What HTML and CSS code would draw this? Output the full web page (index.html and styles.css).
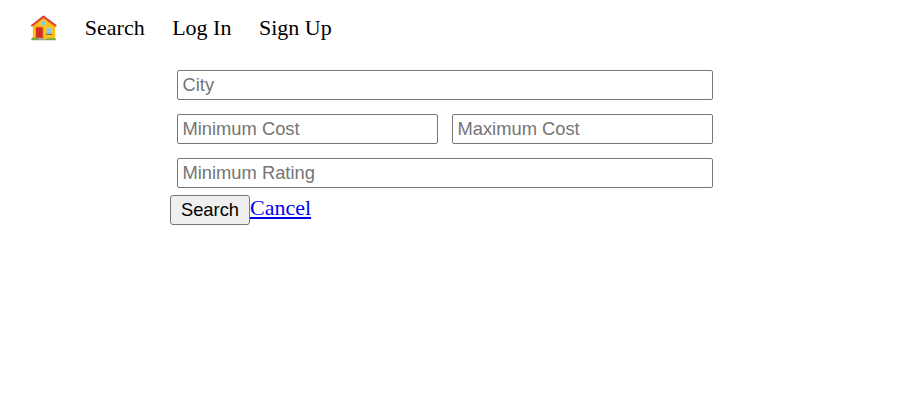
FILE: index.html
```html
<!DOCTYPE html>
<html lang="en">
<head>
<meta charset="utf-8">
<title>Search</title>
<link rel="stylesheet" href="styles.css">
</head>
<body>
<nav class="nav">
  <a class="home" aria-label="Home">
    <svg class="home-icon" viewBox="0 0 26 26" aria-hidden="true">
      <path d="M1.8 11 12.5 2.2 24.2 11v13.4H1.8z" fill="#fcc21b"/>
      <path d="M1.8 12.6 12.5 3.8 24.2 12.6v-2L12.5 1.8 1.8 10.4z" fill="#eda51b"/>
      <path d="M1 10.6 12.5 1.4 24.6 10.6" fill="none" stroke="#df3f38" stroke-width="1.9" stroke-linecap="round" stroke-linejoin="round"/>
      <path d="M10.4 6.2h4v4h-4z" fill="#68c7f5" stroke="#f3dca0" stroke-width=".5"/>
      <path d="M5 12.3h6.8V23H5z" fill="#d92b24" stroke="#c65b1c" stroke-width=".5"/>
      <path d="M15.8 13h4.8v6h-4.8z" fill="#68b8e0" stroke="#d3e2df" stroke-width=".6"/>
      <path d="M18.2 13v6M16 16h4.5" stroke="#d8eef5" stroke-width=".5"/>
      <path d="M15.2 18.8h6V20h-6z" fill="#8b6650"/>
      <path d="M.3 24.7c0-1.8 1.5-2.3 3-2 2 .4 3 .5 5 .4v2.2h-8zM15 23.8c3-.5 6-.5 9.8-.4v1.9H14z" fill="#71aa42"/>
      <path d="M6 22.8h5.5l4 2.5H9z" fill="#a8a19b"/>
    </svg>
  </a>
  <a class="nav-link">Search</a>
  <a class="nav-link">Log In</a>
  <a class="nav-link">Sign Up</a>
</nav>
<form class="search-form">
  <div class="fields">
    <input class="field wide" placeholder="City">
    <input class="field" placeholder="Minimum Cost">
    <input class="field" placeholder="Maximum Cost">
    <input class="field wide" placeholder="Minimum Rating">
  </div>
  <div class="actions">
    <button class="submit" type="button">Search</button>
    <a class="cancel" href="#">Cancel</a>
  </div>
</form>
</body>
</html>
```
FILE: styles.css
```css
* {
  box-sizing: border-box;
}

body {
  margin: 0;
  background: #fff;
  color: #000;
  font-family: "Liberation Serif", serif;
  font-size: 22px;
}

.nav {
  display: flex;
  align-items: center;
  gap: 27.5px;
  height: 56px;
  padding-left: 31px;
}

.home {
  display: flex;
  width: 26.3px;
  height: 26px;
}

.home-icon {
  width: 26px;
  height: 26px;
}

.nav-link {
  color: #000;
  text-decoration: none;
}

.search-form {
  width: 550px;
  margin-left: 170px;
  padding-top: 14px;
}

.fields {
  display: grid;
  grid-template-columns: 1fr 1fr;
  gap: 14px;
  padding: 0 7px 7px;
}

.field {
  width: 100%;
  height: 30px;
  padding: 1px 4.5px;
  border: 1px solid #767676;
  border-radius: 2px;
  font: 18.33px "Liberation Sans", sans-serif;
}

.field::placeholder {
  color: #757575;
}

.wide {
  grid-column: 1 / -1;
}

.actions {
  display: flex;
  align-items: flex-start;
}

.submit {
  height: 30px;
  width: 80px;
  padding: 0;
  border: 1px solid #767676;
  border-radius: 3px;
  background: #efefef;
  color: #000;
  font: 18.33px "Liberation Sans", sans-serif;
}

.cancel {
  color: #0000ee;
  line-height: 25px;
}
```
